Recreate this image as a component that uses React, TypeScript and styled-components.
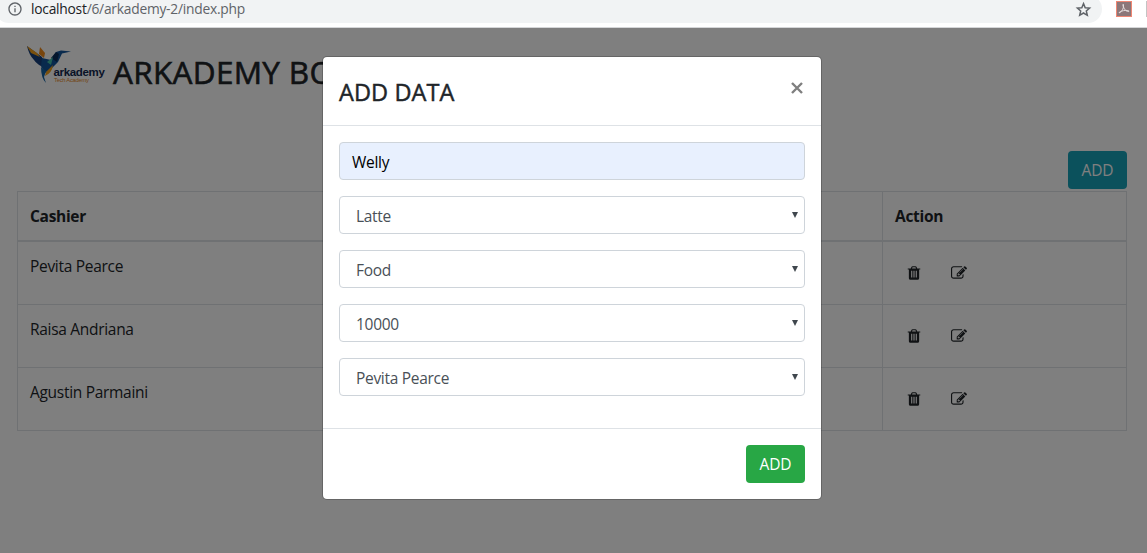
import React from "react";
import styled, { createGlobalStyle } from "styled-components";
import { MdOutlineInfo } from "react-icons/md";

const GlobalStyle = createGlobalStyle`
  * { box-sizing: border-box; }
  body {
    margin: 0;
    overflow: hidden;
    background: #fff;
    color: #212529;
    font: 400 15.5px/24px "Open Sans", "Noto Sans", sans-serif;
    letter-spacing: -0.3px;
  }
`;

const Window = styled.div`
  height: 553px;
  display: flex;
  flex-direction: column;
  overflow: hidden;
`;

const BrowserBar = styled.header`
  height: 28px;
  flex: none;
  display: flex;
  align-items: flex-start;
  overflow: hidden;
  border-bottom: 1px solid #d5d6d8;
  background: #fff;
`;

const AddressPill = styled.div`
  width: 1107px;
  height: 28px;
  margin: -5px 0 0 -5px;
  padding: 0 10px 0 12px;
  flex: none;
  display: flex;
  align-items: center;
  border-radius: 14px;
  background: #f1f3f4;
  color: #5f6368;

  svg { flex: none; }
`;

const Url = styled.span`
  flex: 1;
  margin-left: 8px;
  font-size: 13.8px;
  line-height: 20px;
  letter-spacing: -0.24px;

  b { font-weight: 400; color: #202124; }
`;

const Extension = styled.svg`
  flex: none;
  margin: 1px 0 0 14px;
`;

const Divider = styled.span`
  width: 1px;
  height: 16px;
  margin: 1px 0 0 14px;
  background: #c4c4c4;
`;

const Page = styled.main`
  position: relative;
  flex: 1;
  padding: 0 20px 0 17px;
`;

const Brand = styled.div`
  height: 123px;
  padding: 17px 0 0 8px;
  display: flex;
  align-items: flex-start;
`;

const Title = styled.h1`
  margin: 8px 0 0 6px;
  font-size: 31.5px;
  line-height: 38px;
  font-weight: 500;
  letter-spacing: 0.3px;
  -webkit-text-stroke: 0.6px currentColor;
`;

const Actions = styled.div`
  display: flex;
  justify-content: flex-end;
  height: 40px;
`;

const Button = styled.button<{ $color: string }>`
  width: 59px;
  height: 38px;
  padding: 0;
  border: 0;
  border-radius: 4px;
  background: ${(p) => p.$color};
  color: #fff;
  font: inherit;
  letter-spacing: -0.1px;
`;

const Table = styled.table`
  width: 1110px;
  table-layout: fixed;
  border-collapse: collapse;

  th, td {
    padding: 12px;
    text-align: left;
    vertical-align: top;
    border: 1px solid #dee2e6;
  }
  th { height: 49px; padding-bottom: 11px; border-bottom-width: 2px; font-weight: 700; }
  td { height: 63px; }
  tbody tr:first-child td { height: 64px; }
`;

const RowIcons = styled.div`
  display: flex;
  gap: 29px;
  padding: 11px 0 0 11px;

  svg { width: 16px; height: 16px; fill: #212529; }
`;

const Backdrop = styled.div`
  position: absolute;
  inset: 0;
  display: flex;
  justify-content: center;
  align-items: flex-start;
  padding: 28px 3px 0 0;
  background: rgba(0, 0, 0, 0.5);
`;

const Dialog = styled.section`
  width: 500px;
  border: 1px solid rgba(0, 0, 0, 0.2);
  border-radius: 5px;
  background: #fff;
  background-clip: padding-box;
`;

const DialogHeader = styled.div`
  height: 69px;
  padding: 16px;
  display: flex;
  justify-content: space-between;
  border-bottom: 1px solid #dee2e6;

  h2 {
    margin: 0;
    font-size: 23.5px;
    line-height: 38px;
    font-weight: 500;
    letter-spacing: 0.1px;
    -webkit-text-stroke: 0.45px currentColor;
  }
`;

const Close = styled.svg`
  width: 12px;
  height: 12px;
  margin: 9px 2.5px 0 0;
  stroke: #7f7f7f;
  stroke-width: 2.4;
`;

const Fields = styled.div`
  display: grid;
  gap: 16px;
  padding: 16px 16px 32px;
`;

const Field = styled.div<{ $filled?: boolean }>`
  height: 38px;
  padding: ${(p) => (p.$filled ? "0 12px" : "0 6px 0 16px")};
  display: flex;
  align-items: center;
  justify-content: space-between;
  border: 1px solid #ced4da;
  border-radius: 4px;
  background: ${(p) => (p.$filled ? "#e8f0fe" : "#fff")};
  color: ${(p) => (p.$filled ? "#000" : "#495057")};

  span { padding-top: 2px; }
`;

const Caret = styled.i`
  width: 6px;
  height: 6px;
  background: #40474e;
  clip-path: polygon(0 0, 100% 0, 50% 100%);
`;

const DialogFooter = styled.div`
  display: flex;
  justify-content: flex-end;
  padding: 16px;
  border-top: 1px solid #dee2e6;
`;

const StarIcon = () => (
  <svg width="17" height="17" viewBox="0 0 17 17" fill="none" stroke="currentColor" strokeWidth="1.5">
    <path d="M8.5 2.6L10.2 6.7L14.6 7.1L11.3 10L12.3 14.3L8.5 12L4.7 14.3L5.7 10L2.4 7.1L6.8 6.7Z" />
  </svg>
);

const TrashIcon = () => (
  <svg viewBox="0 0 1792 1792">
    <path d="M704 1376v-704q0-14-9-23t-23-9h-64q-14 0-23 9t-9 23v704q0 14 9 23t23 9h64q14 0 23-9t9-23zm256 0v-704q0-14-9-23t-23-9h-64q-14 0-23 9t-9 23v704q0 14 9 23t23 9h64q14 0 23-9t9-23zm256 0v-704q0-14-9-23t-23-9h-64q-14 0-23 9t-9 23v704q0 14 9 23t23 9h64q14 0 23-9t9-23zm-544-992h448l-48-117q-7-9-17-11h-317q-10 2-17 11zm928 32v64q0 14-9 23t-23 9h-96v948q0 83-47 143.5t-113 60.5h-832q-66 0-113-58.5t-47-141.5v-952h-96q-14 0-23-9t-9-23v-64q0-14 9-23t23-9h309l70-167q15-37 54-63t79-26h320q40 0 79 26t54 63l70 167h309q14 0 23 9t9 23z" />
  </svg>
);

const EditIcon = () => (
  <svg viewBox="0 0 1792 1792">
    <path d="M888 1184l116-116-152-152-116 116v56h96v96h56zm440-720q-16-16-33 1l-350 350q-17 17-1 33t33-1l350-350q17-17 1-33zm80 594v190q0 119-84.5 203.5t-203.5 84.5h-832q-119 0-203.5-84.5t-84.5-203.5v-832q0-119 84.5-203.5t203.5-84.5h832q63 0 117 25 15 7 18 23 3 17-9 29l-49 49q-14 14-32 8-23-6-45-6h-832q-66 0-113 47t-47 113v832q0 66 47 113t113 47h832q66 0 113-47t47-113v-126q0-13 9-22l64-64q15-15 35-7t20 29zm-96-738l288 288-672 672h-288v-288zm444 132l-92 92-288-288 92-92q28-28 68-28t68 28l152 152q28 28 28 68t-28 68z" />
  </svg>
);

const Logo = () => (
  <svg width="82" height="42" viewBox="0 0 82 42">
    <path d="M2 1L17 12L21 23Q12 20 9 15Q4 10 2 1Z" fill="#173f7c" />
    <path d="M2 1L12 8L15 12L6 8Z" fill="#f5a11a" />
    <path d="M15 2L20 8L19 13L14 9Z" fill="#f08a1d" />
    <path d="M17 13L26 15L31 7L36 5.5L46 6.5L37 8.5L33 17L27 23L20 28L16 21Z" fill="#12549a" />
    <path d="M26 13L31 7L34 9L32 17Z" fill="#0b2c58" />
    <path d="M22 17L28 12L26 20Z" fill="#43bfa9" />
    <path d="M28 20L21 27L20 31Q27 28 28 20Z" fill="#f5a11a" />
    <path d="M16 22L21 26L19 32L21 38Q16 33 16 22Z" fill="#1665a5" />
    <text x="28.5" y="31" fontFamily="Liberation Sans, sans-serif" fontSize="11.5" fontWeight="700" letterSpacing="-0.3" textLength="51" fill="#12284f">arkademy</text>
    <text x="29" y="37" fontFamily="Liberation Sans, sans-serif" fontSize="5.8" letterSpacing="0" textLength="35" fill="#e88a2a">Tech Academy</text>
  </svg>
);

const cashiers = ["Pevita Pearce", "Raisa Andriana", "Agustin Parmaini"];
const selections = ["Latte", "Food", "10000", "Pevita Pearce"];

export default function App() {
  return (
    <Window>
      <GlobalStyle />
      <BrowserBar>
        <AddressPill>
          <MdOutlineInfo size={16} />
          <Url><b>localhost</b>/6/arkademy-2/index.php</Url>
          <StarIcon />
        </AddressPill>
        <Extension width="16" height="16" viewBox="0 0 16 16">
          <rect x=".5" y=".5" width="15" height="15" fill="#8b7779" stroke="#ef8673" />
          <path d="M3 12C6 11 8 7 7.5 3.5C7 2.5 6.5 4 7.5 6C8.5 9 11 11 13 10.5C13.5 9.5 10 9 7 9.8C5 10.3 3 11 3 12Z" fill="none" stroke="#e4dcdc" />
        </Extension>
        <Divider />
      </BrowserBar>
      <Page>
        <Brand>
          <Logo />
          <Title>ARKADEMY BO</Title>
        </Brand>
        <Actions><Button $color="#17a2b8">ADD</Button></Actions>
        <Table>
          <colgroup><col style={{ width: 400 }} /><col /><col style={{ width: 244 }} /></colgroup>
          <thead><tr><th>Cashier</th><th /><th>Action</th></tr></thead>
          <tbody>
            {cashiers.map((name) => (
              <tr key={name}>
                <td>{name}</td>
                <td />
                <td><RowIcons><TrashIcon /><EditIcon /></RowIcons></td>
              </tr>
            ))}
          </tbody>
        </Table>
        <Backdrop>
          <Dialog role="dialog">
            <DialogHeader>
              <h2>ADD DATA</h2>
              <Close viewBox="0 0 12 12"><path d="M1 1L11 11M11 1L1 11" /></Close>
            </DialogHeader>
            <Fields>
              <Field $filled><span>Welly</span></Field>
              {selections.map((value) => (
                <Field key={value}><span>{value}</span><Caret /></Field>
              ))}
            </Fields>
            <DialogFooter><Button $color="#28a745">ADD</Button></DialogFooter>
          </Dialog>
        </Backdrop>
      </Page>
    </Window>
  );
}
